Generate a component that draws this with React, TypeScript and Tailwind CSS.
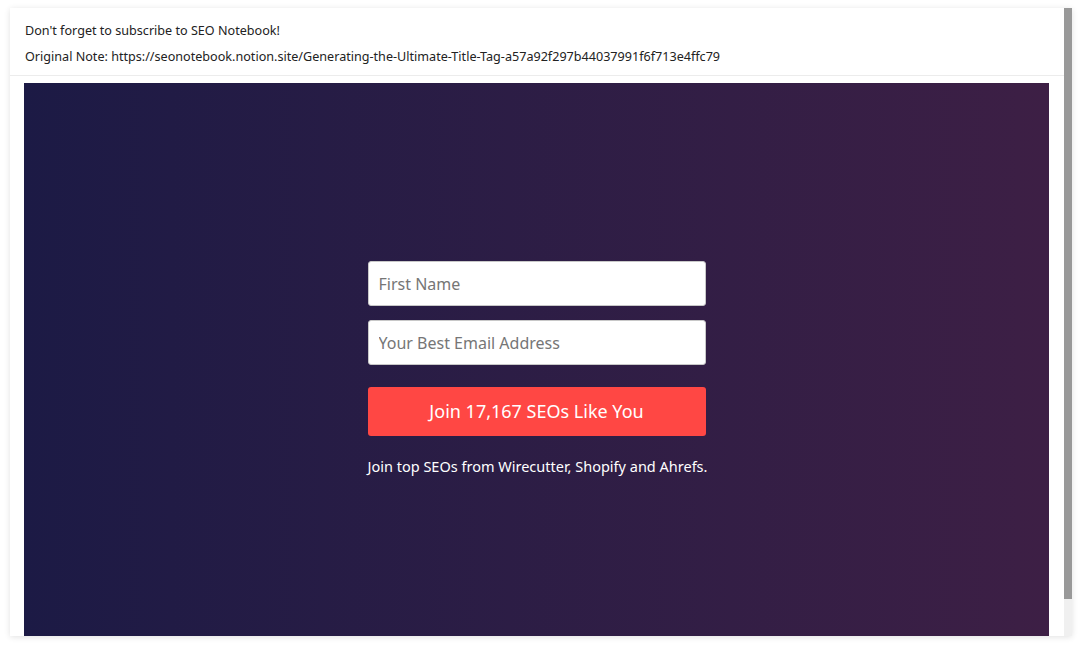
export default function App() {
  return (
    <div className="w-[1080px] h-[646px] bg-white pt-[8px] pl-[10px] overflow-hidden" style={{ fontFamily: '"Noto Sans", sans-serif' }}>
      <div className="w-[1062px] h-[628px] bg-white flex shadow-[0_1px_6px_rgba(0,0,0,0.12)] overflow-hidden">
        <div className="flex-1 flex flex-col">
          <div className="pt-[10px] pb-[5px] pl-[15px] border-b border-[#ececec] text-[12.6px] leading-[26px] text-[#222]">
            <p>Don't forget to subscribe to SEO Notebook!</p>
            <p>Original Note: https://seonotebook.notion.site/Generating-the-Ultimate-Title-Tag-a57a92f297b44037991f6f713e4ffc79</p>
          </div>
          <div className="mt-[7px] ml-[14px] mr-[15px] flex-1 bg-gradient-to-r from-[#1c1a45] to-[#3d1f45] flex justify-center pt-[178px]">
            <div className="w-[338px] flex flex-col">
              <input
                className="h-[45px] bg-white border border-[#c8c8c8] rounded-[3px] px-[10px] text-[16px] text-[#333] placeholder:text-[#767676] outline-none"
                placeholder="First Name"
              />
              <input
                className="mt-[14px] h-[45px] bg-white border border-[#c8c8c8] rounded-[3px] px-[10px] text-[16px] text-[#333] placeholder:text-[#767676] outline-none"
                placeholder="Your Best Email Address"
              />
              <button className="mt-[22px] h-[49px] rounded-[3px] bg-[#ff4744] text-white text-[18px]">
                Join 17,167 SEOs Like You
              </button>
              <p className="mt-[20px] text-center text-white text-[14.5px] leading-[20px] whitespace-nowrap">
                Join top SEOs from Wirecutter, Shopify and Ahrefs.
              </p>
            </div>
          </div>
        </div>
        <div className="w-[8px] flex flex-col bg-[#f0f0f0]">
          <div className="h-[591px] bg-[#999]" />
        </div>
      </div>
    </div>
  );
}
